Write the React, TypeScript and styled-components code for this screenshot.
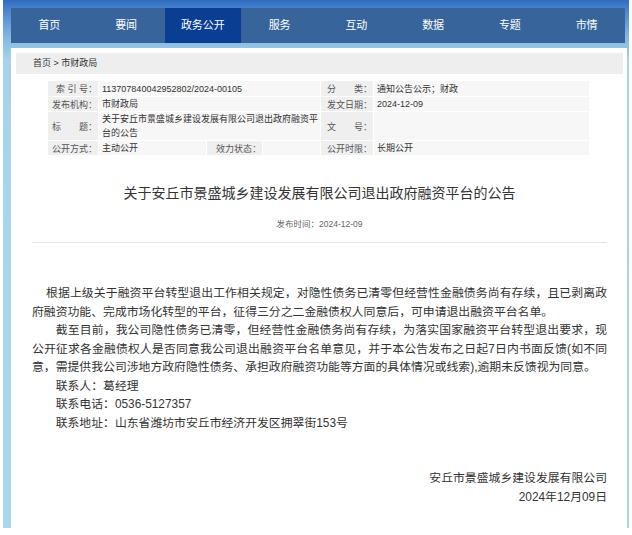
import React from "react";
import styled, { createGlobalStyle } from "styled-components";

const GlobalStyle = createGlobalStyle`
  html, body {
    margin: 0;
    padding: 0;
    background: #fff;
  }
  body {
    font-family: "Liberation Sans", "Noto Sans CJK SC", sans-serif;
    color: #333;
  }
`;

const navItems = ["首页", "要闻", "政务公开", "服务", "互动", "数据", "专题", "市情"];

const infoRows = [
  { label: "索 引 号：", value: "113707840042952802/2024-00105", label2: "分　　类：", value2: "通知公告公示；财政" },
  { label: "发布机构：", value: "市财政局", label2: "发文日期：", value2: "2024-12-09" },
  {
    label: "标　　题：",
    value: "关于安丘市景盛城乡建设发展有限公司退出政府融资平台的公告",
    label2: "文　　号：",
    value2: "",
  },
];

const Page = styled.div`
  margin-left: 3px;
  width: 626px;
  box-sizing: border-box;
  padding: 8px 2px 0 8px;
  background: linear-gradient(
    180deg,
    #2f6cc1 0px,
    #4a86cf 10px,
    #86b9e2 38px,
    #a6d3ea 60px,
    #a9d8ea 100%
  );
`;

const Nav = styled.nav`
  display: flex;
  height: 35px;
  margin-right: 2px;
  background: #37659b;
`;

const NavItem = styled.a<{ $active?: boolean }>`
  flex: 1;
  text-align: center;
  line-height: 35px;
  font-size: 11px;
  color: #fff;
  text-decoration: none;
  background: ${(p) => (p.$active ? "#0a3e92" : "transparent")};
`;

const Panel = styled.div`
  margin-top: 5px;
  background: #fff;
  padding: 5px 4px 21px 5px;
`;

const Crumb = styled.div`
  height: 21px;
  line-height: 21px;
  padding-left: 17px;
  background: #eeeeee;
  font-size: 9px;
  color: #333;
`;

const InfoTable = styled.table`
  margin: 6px 0 0 31px;
  width: 543px;
  table-layout: fixed;
  border-collapse: separate;
  border-spacing: 1px;
  font-size: 9px;
`;

const Row = styled.tr<{ $h: number }>`
  height: ${(p) => p.$h}px;
`;

const Label = styled.td`
  padding: 0 1px 0 0;
  text-align: right;
  background: #efefef;
  color: #555;
  white-space: nowrap;
`;

const Value = styled.td`
  padding: 0 2px 0 3px;
  line-height: 14px;
  background: #f7f7f7;
  color: #333;
`;

const Article = styled.div`
  padding: 0 16px;
`;

const Title = styled.h1`
  margin: 27px 0 0;
  font-size: 14px;
  line-height: 20px;
  font-weight: normal;
  text-align: center;
  color: #333;
`;

const PubDate = styled.div`
  margin-top: 15px;
  font-size: 8.5px;
  line-height: 12px;
  text-align: center;
  color: #666;
`;

const Divider = styled.hr`
  margin: 12px 0 0;
  border: 0;
  height: 1px;
  background: #e4e4e4;
`;

const Body = styled.div`
  margin-top: 41px;
`;

const Para = styled.p<{ $indent: string }>`
  margin: 0;
  font-size: 11.85px;
  line-height: 18.5px;
  text-align: justify;
  text-indent: ${(p) => p.$indent};
  color: #333;
`;

const Sign = styled.div`
  margin-top: 37px;
  font-size: 11.85px;
  line-height: 19px;
  text-align: right;
  color: #333;
`;

export default function App() {
  return (
    <>
      <GlobalStyle />
      <Page>
        <Nav>
          {navItems.map((item) => (
            <NavItem key={item} $active={item === "政务公开"}>
              {item}
            </NavItem>
          ))}
        </Nav>
        <Panel>
          <Crumb>首页 &gt; 市财政局</Crumb>
          <InfoTable>
            <colgroup>
              <col style={{ width: 50 }} />
              <col style={{ width: 107 }} />
              <col style={{ width: 55 }} />
              <col style={{ width: 57 }} />
              <col style={{ width: 52 }} />
              <col style={{ width: 215 }} />
            </colgroup>
            <tbody>
              {infoRows.map((r, i) => (
                <Row key={r.label} $h={[15, 14, 28][i]}>
                  <Label>{r.label}</Label>
                  <Value colSpan={3}>{r.value}</Value>
                  <Label>{r.label2}</Label>
                  <Value>{r.value2}</Value>
                </Row>
              ))}
              <Row $h={14}>
                <Label>公开方式：</Label>
                <Value>主动公开</Value>
                <Label>效力状态：</Label>
                <Value />
                <Label>公开时限：</Label>
                <Value>长期公开</Value>
              </Row>
            </tbody>
          </InfoTable>
          <Article>
            <Title>关于安丘市景盛城乡建设发展有限公司退出政府融资平台的公告</Title>
            <PubDate>发布时间：2024-12-09</PubDate>
            <Divider />
            <Body>
              <Para $indent="14px">
                根据上级关于融资平台转型退出工作相关规定，对隐性债务已清零但经营性金融债务尚有存续，且已剥离政府融资功能、完成市场化转型的平台，征得三分之二金融债权人同意后，可申请退出融资平台名单。
              </Para>
              <Para $indent="2em">
                截至目前，我公司隐性债务已清零，但经营性金融债务尚有存续，为落实国家融资平台转型退出要求，现公开征求各金融债权人是否同意我公司退出融资平台名单意见，并于本公告发布之日起7日内书面反馈(如不同意，需提供我公司涉地方政府隐性债务、承担政府融资功能等方面的具体情况或线索),逾期未反馈视为同意。
              </Para>
              <Para $indent="2em">联系人：葛经理</Para>
              <Para $indent="2em">联系电话：0536-5127357</Para>
              <Para $indent="2em">联系地址：山东省潍坊市安丘市经济开发区拥翠街153号</Para>
            </Body>
            <Sign>
              安丘市景盛城乡建设发展有限公司
              <br />
              2024年12月09日
            </Sign>
          </Article>
        </Panel>
      </Page>
    </>
  );
}
